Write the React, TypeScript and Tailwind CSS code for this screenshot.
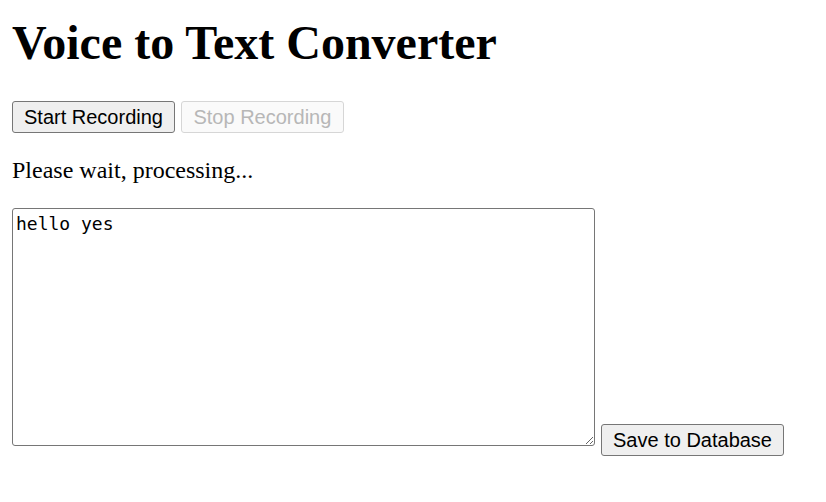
export default function App() {
  return (
    <div className="px-[12px] pt-[15px] bg-white min-h-[502px] text-black">
      <h1 className="font-['Liberation_Serif',serif] font-bold text-[48px] leading-[55px] mb-[31px]">
        Voice to Text Converter
      </h1>

      <div className="flex gap-[6px] font-['Liberation_Sans',Arial,sans-serif] text-[20px]">
        <button className="h-[32px] px-[11px] leading-[23px] bg-[#efefef] border-[1.5px] border-[#767676] rounded-[3px] text-black">
          Start Recording
        </button>
        <button
          disabled
          className="h-[32px] px-[11.5px] leading-[23px] bg-[#fafafa] border-[1.5px] border-[#d6d6d6] rounded-[3px] text-[#b7b7b7]"
        >
          Stop Recording
        </button>
      </div>

      <p className="mt-[24px] font-['Liberation_Serif',serif] text-[24px] leading-[27px]">
        Please wait, processing...
      </p>

      <div className="mt-[24px] flex items-end gap-[6px]">
        <textarea
          defaultValue="hello yes"
          className="w-[583px] h-[238px] mb-[10px] px-[3px] pt-[4px] pb-[3px] border-[1.5px] border-[#767676] rounded-[3px] font-['DejaVu_Sans_Mono',monospace] text-[18px] leading-[21px] resize outline-none"
        />
        <button className="h-[32px] w-[183px] px-[9px] leading-[23px] bg-[#efefef] border-[1.5px] border-[#767676] rounded-[3px] font-['Liberation_Sans',Arial,sans-serif] text-[20px] text-black">
          Save to Database
        </button>
      </div>
    </div>
  );
}
